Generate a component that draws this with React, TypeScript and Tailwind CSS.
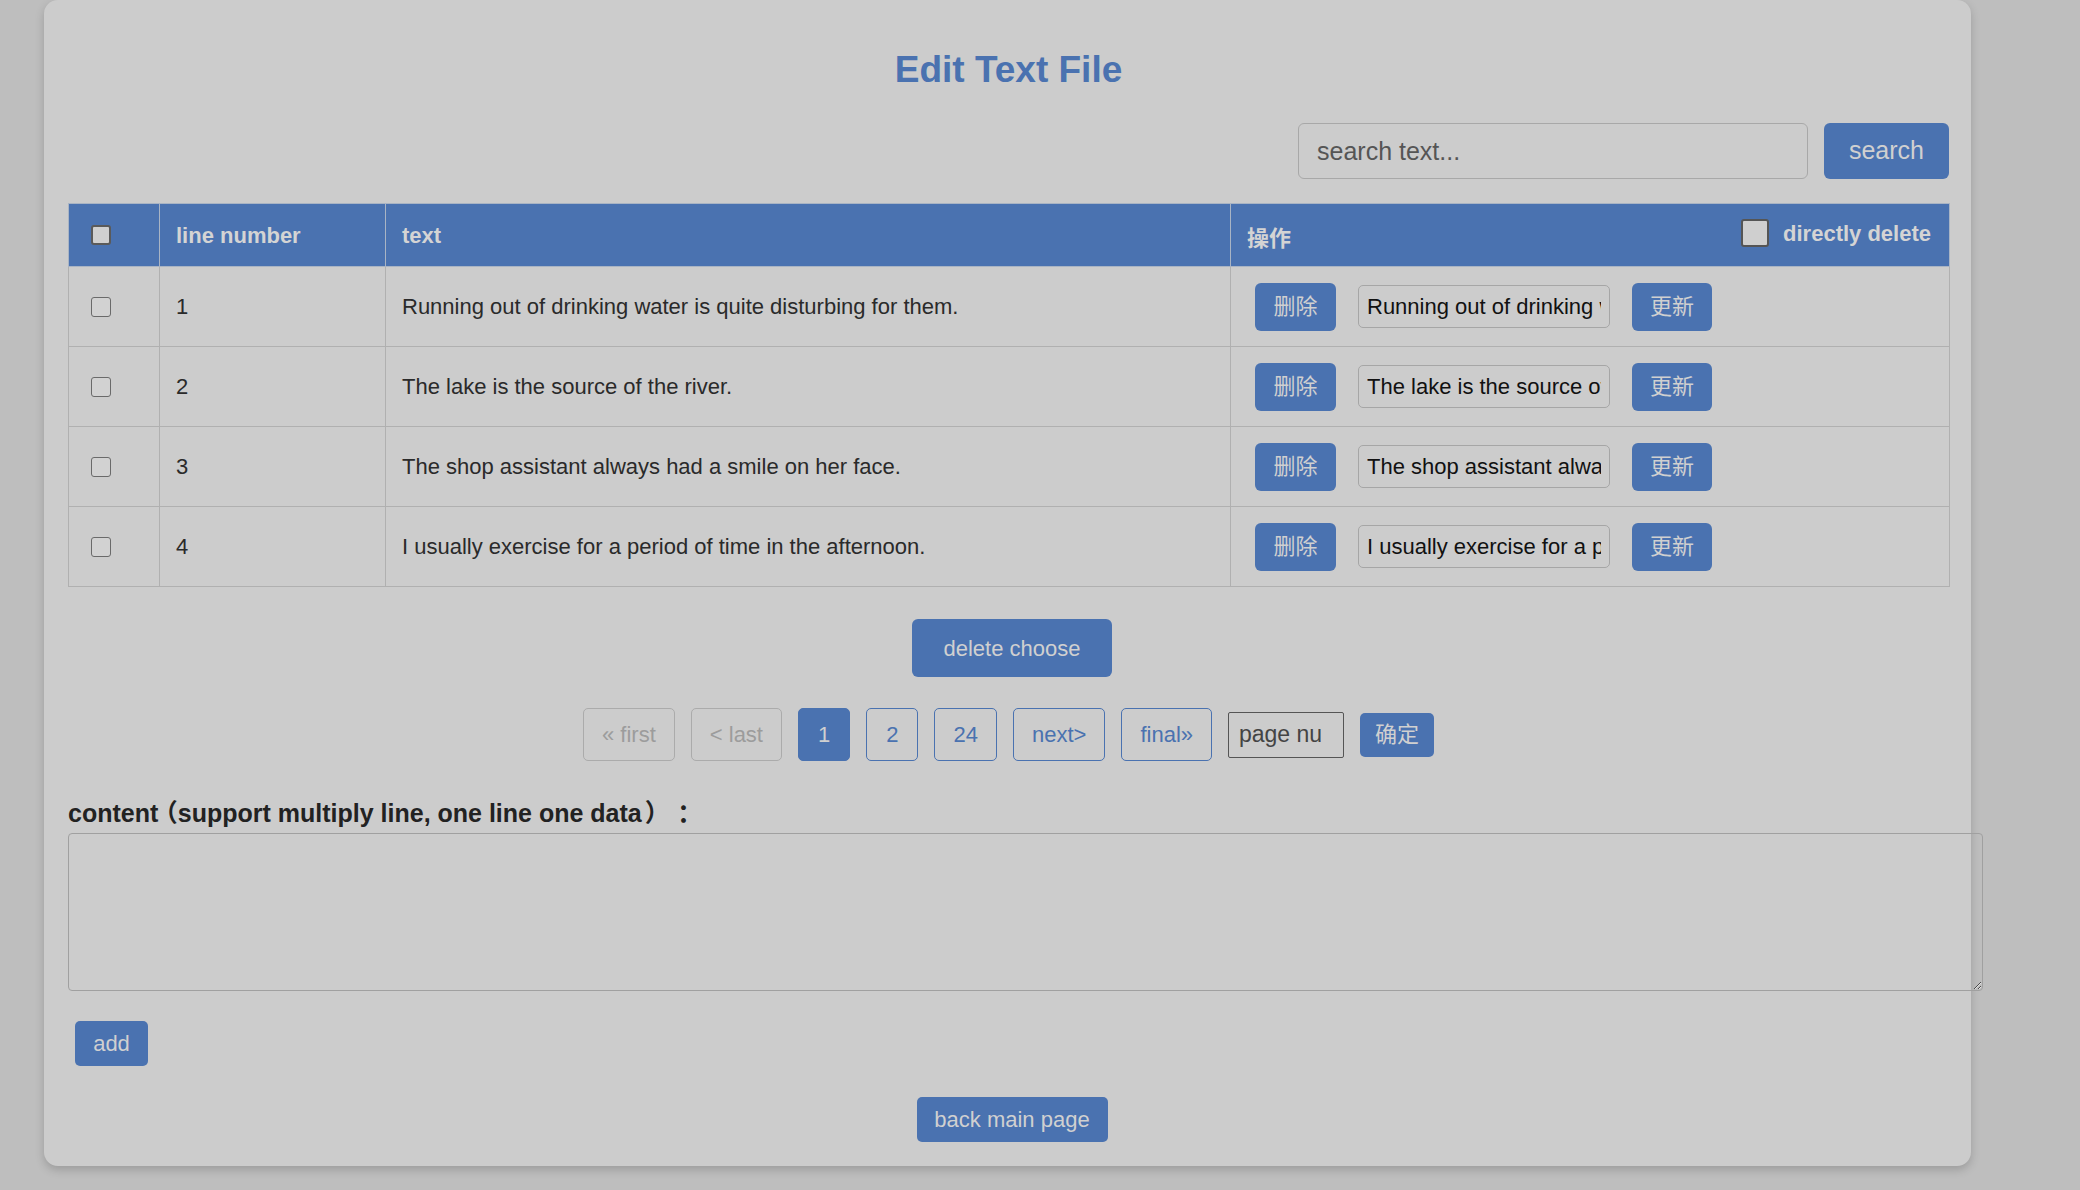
import React, { useState } from "react";

const rows = [
  { id: 1, text: "Running out of drinking water is quite disturbing for them." },
  { id: 2, text: "The lake is the source of the river." },
  { id: 3, text: "The shop assistant always had a smile on her face." },
  { id: 4, text: "I usually exercise for a period of time in the afternoon." },
];

const font = { fontFamily: '"Liberation Sans", Arial, "Noto Sans CJK SC", sans-serif' };

export default function App() {
  const [checked, setChecked] = useState<number[]>([]);
  const [direct, setDirect] = useState(false);

  const toggle = (id: number) =>
    setChecked((c) => (c.includes(id) ? c.filter((x) => x !== id) : [...c, id]));

  return (
    <div className="min-h-screen w-full bg-[#bebebe]" style={font}>
      <div className="ml-[44px] w-[1927px] rounded-[14px] bg-[#cccccc] pl-[24px] pr-[22px] pt-[48px] pb-[24px] shadow-[0_4px_10px_rgba(0,0,0,0.18)]">
        <h1 className="text-center text-[37px] leading-[43px] font-bold text-[#4a72b0]">Edit Text File</h1>

        <div className="mt-[32px] flex justify-end gap-[16px]">
          <input
            placeholder="search text..."
            className="w-[510px] h-[56px] rounded-[6px] border border-[#a8a8a8] bg-transparent px-[18px] text-[25px] text-[#222] placeholder:text-[#555] outline-none"
          />
          <button className="w-[125px] h-[56px] rounded-[6px] bg-[#4a72b0] text-[25px] text-[#d0d0d0]">search</button>
        </div>

        <table className="mt-[24px] w-full table-fixed border-collapse">
          <colgroup>
            <col className="w-[91px]" />
            <col className="w-[226px]" />
            <col className="w-[845px]" />
            <col className="w-[719px]" />
          </colgroup>
          <thead>
            <tr className="h-[63px] bg-[#4a72b0] text-[22px] font-bold text-[#d4d4d4]">
              <th className="border border-[#a9b4c4] pl-[22px] text-left">
                <input type="checkbox" className="appearance-none block w-[20px] h-[20px] rounded-[3px] border-2 border-[#5a5a5a] bg-[#d0d0d0]" />
              </th>
              <th className="border border-[#a9b4c4] px-[16px] text-left">line number</th>
              <th className="border border-[#a9b4c4] px-[16px] text-left">text</th>
              <th className="border border-[#a9b4c4] pl-[16px] pr-[18px] text-left">
                <div className="flex items-center justify-between">
                  <span className="mt-[6px]">操作</span>
                  <label className="flex items-center gap-[14px] mb-[4px]">
                    <input
                      type="checkbox"
                      checked={direct}
                      onChange={() => setDirect(!direct)}
                      className="appearance-none block w-[28px] h-[28px] rounded-[3px] border-2 border-[#555] bg-[#cfcfcf]"
                    />
                    <span>directly delete</span>
                  </label>
                </div>
              </th>
            </tr>
          </thead>
          <tbody>
            {rows.map((r) => (
              <tr key={r.id} className="h-[80px] text-[22px] text-[#2a2a2a]">
                <td className="border border-[#b0b0b0] pl-[22px]">
                  <input
                    type="checkbox"
                    checked={checked.includes(r.id)}
                    onChange={() => toggle(r.id)}
                    className="appearance-none block w-[20px] h-[20px] rounded-[3px] border-[1.5px] border-[#6a6a6a] bg-[#d2d2d2]"
                  />
                </td>
                <td className="border border-[#b0b0b0] px-[16px]">{r.id}</td>
                <td className="border border-[#b0b0b0] px-[16px]">{r.text}</td>
                <td className="border border-[#b0b0b0] pl-[24px]">
                  <div className="flex items-center gap-[22px]">
                    <button className="w-[81px] h-[48px] rounded-[6px] bg-[#4a72b0] text-[22px] text-[#d0d0d0]">删除</button>
                    <input
                      defaultValue={r.text}
                      className="w-[252px] h-[43px] rounded-[5px] border border-[#a6a6a6] bg-transparent px-[8px] text-[22px] text-[#111] outline-none"
                    />
                    <button className="w-[80px] h-[48px] rounded-[6px] bg-[#4a72b0] text-[22px] text-[#d0d0d0]">更新</button>
                  </div>
                </td>
              </tr>
            ))}
          </tbody>
        </table>

        <div className="mt-[32px] flex justify-center pl-[7px]">
          <button className="w-[200px] h-[58px] rounded-[6px] bg-[#4a72b0] text-[22px] text-[#d0d0d0]">delete choose</button>
        </div>

        <div className="mt-[31px] flex items-center justify-center gap-[16px] text-[22px]">
          <span className="flex h-[53px] items-center rounded-[5px] border border-[#ababab] px-[18px] text-[#9c9c9c]">« first</span>
          <span className="flex h-[53px] items-center rounded-[5px] border border-[#ababab] px-[18px] text-[#9c9c9c]">&lt; last</span>
          <span className="flex h-[53px] items-center rounded-[5px] border border-[#4a72b0] bg-[#4a72b0] px-[19px] text-[#d0d0d0]">1</span>
          <span className="flex h-[53px] items-center rounded-[5px] border border-[#4a72b0] px-[19px] text-[#4a72b0]">2</span>
          <span className="flex h-[53px] items-center rounded-[5px] border border-[#4a72b0] px-[18px] text-[#4a72b0]">24</span>
          <span className="flex h-[53px] items-center rounded-[5px] border border-[#4a72b0] px-[18px] text-[#4a72b0]">next&gt;</span>
          <span className="flex h-[53px] items-center rounded-[5px] border border-[#4a72b0] px-[18px] text-[#4a72b0]">final»</span>
          <input
            placeholder="page number"
            className="w-[116px] h-[46px] rounded-[2px] border border-[#555] bg-transparent pl-[10px] pr-[22px] text-[23px] placeholder:text-[#444] outline-none"
          />
          <button className="w-[74px] h-[44px] rounded-[5px] bg-[#4a72b0] text-[22px] text-[#d0d0d0]">确定</button>
        </div>

        <div className="mt-[38px] text-[25px] leading-[28px] font-bold text-[#222]">
          content<span className="ml-[7px] [font-feature-settings:'halt']">（</span>support multiply line, one line one data<span className="ml-[3px] [font-feature-settings:'halt']">）</span><span className="ml-[20px] [font-feature-settings:'halt']">：</span>
        </div>
        <textarea className="mt-[6px] box-content block w-full h-[140px] rounded-[4px] border border-[#a0a0a0] bg-transparent px-[16px] py-[8px] text-[22px] outline-none" />

        <button className="mt-[30px] ml-[7px] w-[73px] h-[45px] rounded-[5px] bg-[#4a72b0] text-[22px] text-[#d0d0d0]">add</button>

        <div className="mt-[31px] flex justify-center pl-[7px]">
          <button className="w-[191px] h-[45px] rounded-[5px] bg-[#4a72b0] text-[22px] text-[#d0d0d0]">back main page</button>
        </div>
      </div>
    </div>
  );
}
